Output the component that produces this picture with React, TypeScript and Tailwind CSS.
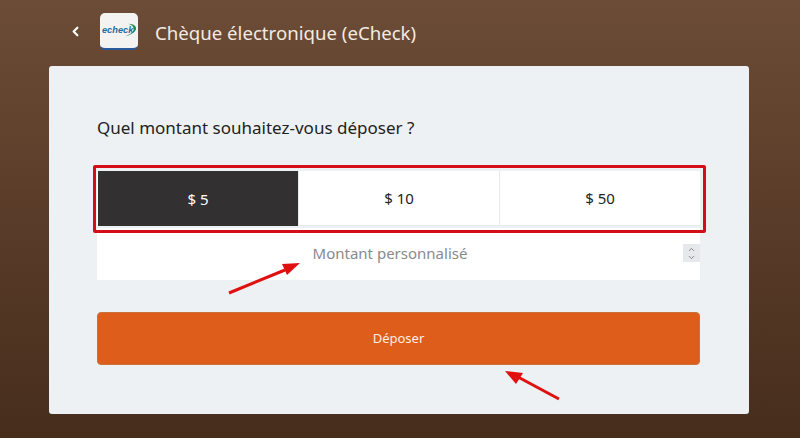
import { ChevronLeft, ChevronDown, ChevronUp } from "lucide-react";

const amounts = ["$ 5", "$ 10", "$ 50"];

function EcheckLogo() {
  return (
    <div className="flex h-[37px] w-[38px] items-center justify-center rounded-[5px] border-b-2 border-[#2a5a9a] bg-[#f3f3f1]">
      <svg width="36" height="18" viewBox="0 0 37 18">
        <path d="M28 2.500c6 .3 8.500 2.500 8 5.500-.5 3-5 6-11 7.500 5-2 8-4 8.500-7 .4-2.800-1.500-4.800-5.500-6z" fill="#1f8a55" />
        <text x="1" y="12" fontSize="9.500" fontStyle="italic" fontWeight="700" fontFamily="'Liberation Sans', sans-serif" fill="#2b6aa0">
          echeck
        </text>
      </svg>
    </div>
  );
}

export default function App() {
  return (
    <div className="relative h-[438px] w-[800px] overflow-hidden bg-gradient-to-b from-[#6c4c36] to-[#472d1c] font-['Noto_Sans',sans-serif]">
      <header className="flex h-[66px] items-center pb-[1px] pl-[68px]">
        <ChevronLeft className="-mt-[2px] h-[15px] w-[15px] text-white" strokeWidth={3.500} />
        <div className="-mt-[3px] ml-[17px]">
          <EcheckLogo />
        </div>
        <h1 className="ml-[17px] pt-[1px] text-[18.640px] leading-none text-[#f3ebe2]">Chèque électronique (eCheck)</h1>
      </header>

      <main className="ml-[49px] h-[348px] w-[700px] rounded-[3px] bg-[#edf1f3] pl-[48px] pt-[51px]">
        <p className="text-[17px] leading-[22px] text-[#222]">Quel montant souhaitez-vous déposer ?</p>

        <div className="mt-[32px] flex h-[55px] w-[603px] bg-white">
          {amounts.map((amount, index) => (
            <div
              key={amount}
              className={
                index === 0
                  ? "ml-[1px] flex w-[200px] items-center justify-center bg-[#333031] pt-[1px] text-[15px] text-white"
                  : "flex w-[201px] items-center justify-center border-b border-l border-[#e6eaec] pt-[1px] text-[15px] text-[#222]"
              }
            >
              {amount}
            </div>
          ))}
        </div>

        <div className="relative mt-[2px] flex h-[52px] w-[603px] items-center justify-center bg-white pb-[1px] pr-[17px] text-[15px] text-[#868b8e]">
          Montant personnalisé
          <div className="absolute right-[0px] top-[16px] flex h-[18px] w-[17px] flex-col items-center justify-center bg-[#e6e8ec] text-[#666]">
            <ChevronUp className="-mb-[1px] h-[9px] w-[9px]" strokeWidth={2} />
            <ChevronDown className="h-[9px] w-[9px]" strokeWidth={2} />
          </div>
        </div>

        <button
          type="button"
          className="mt-[32px] flex h-[53px] w-[603px] items-center justify-center rounded-[4px] border border-[#c9703c] bg-[#df5d1a] text-[13px] text-[#fdeee2]"
        >
          Déposer
        </button>
      </main>

      {/* annotations drawn over the screenshot */}
      <div className="absolute left-[93px] top-[165px] h-[68px] w-[613px] rounded-[2px] border-[3px] border-[#d40d19]" />
      <svg className="absolute left-0 top-0" width="800" height="438" viewBox="0 0 800 438">
        <line x1="229" y1="293" x2="285" y2="270" stroke="#e01010" strokeWidth="3" />
        <polygon points="300,263 282,264 287,275" fill="#e01010" />
        <line x1="559" y1="399" x2="518" y2="377" stroke="#e01010" strokeWidth="3" />
        <polygon points="505,371 523,373 516,384" fill="#e01010" />
      </svg>
    </div>
  );
}
